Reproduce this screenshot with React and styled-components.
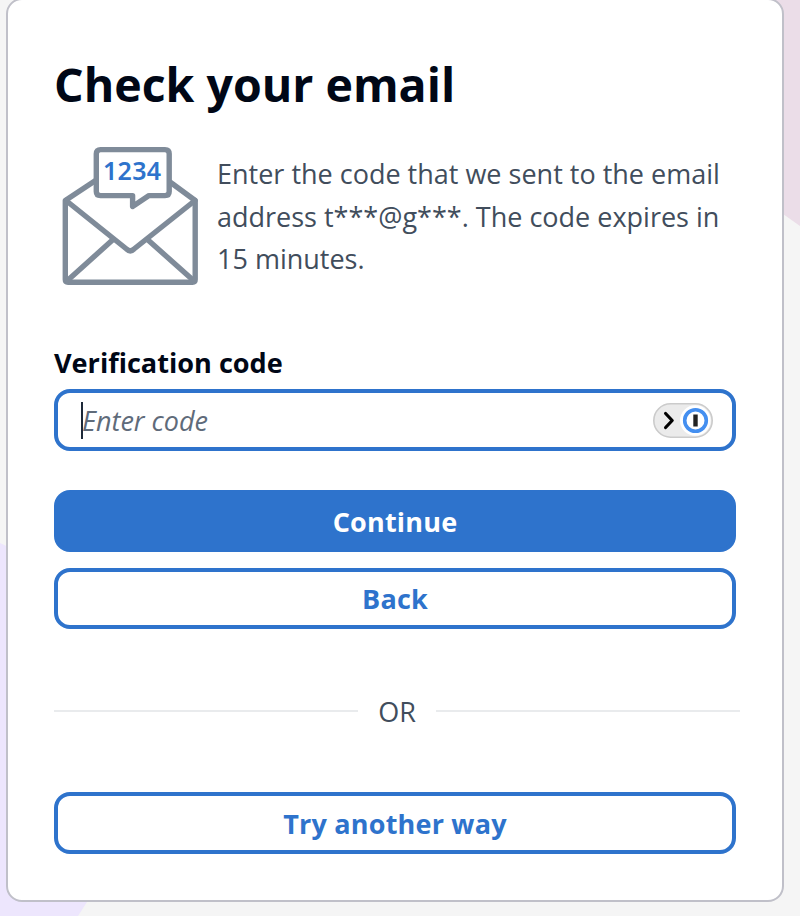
import React, { useState } from "react";
import styled, { createGlobalStyle } from "styled-components";

export default function App() {
  const [code, setCode] = useState("");

  return (
    <>
      <GlobalStyle />
      <Page>
        <Backdrop viewBox="0 0 800 916">
          <path d="M776 0H800V226L776 209Z" fill="#ebdde8" />
          <path d="M0 543L40 562V860H114L78 916H0Z" fill="#ede6fd" />
        </Backdrop>
        <Card>
          <Title>Check your email</Title>

          <Intro>
            <EmailArt />
            <Message>
              Enter the code that we sent to the email address t***@g***. The
              code expires in 15 minutes.
            </Message>
          </Intro>

          <Label htmlFor="code">Verification code</Label>
          <Field>
            <Caret />
            <Input
              id="code"
              placeholder="Enter code"
              value={code}
              onChange={(e) => setCode(e.target.value)}
            />
            <PasswordBadge />
          </Field>

          <Actions>
            <Button $primary>Continue</Button>
            <Button>Back</Button>
          </Actions>

          <Divider>
            <Line />
            <span>OR</span>
            <Line />
          </Divider>

          <Button>Try another way</Button>
        </Card>
      </Page>
    </>
  );
}

const EmailArt = () => (
  <Art viewBox="0 0 160 160">
    <g
      fill="none"
      stroke="#7f8b99"
      strokeWidth="5.4"
      strokeLinejoin="round"
      strokeLinecap="round"
    >
      <path d="M45.5 45.5L15.3 65.5V144.5Q15.3 147.2 18 147.2H142.5Q145.2 147.2 145.2 144.5V65.5L120 47" />
      <path d="M16 65.5L76.5 114Q80.3 117.6 84 114L145 65.5" />
      <path d="M17.5 145.5L62.5 105M143.5 145.5L98 105" />
      <path
        d="M50.5 14.6H115Q119.2 14.6 119.2 18.8V56.5Q119.2 60.6 115 60.6H99L82.6 71.5V60.6H50.5Q46.3 60.6 46.3 56.5V18.8Q46.3 14.6 50.5 14.6Z"
        fill="#fff"
      />
    </g>
    <ArtText x="53" y="45.2" textLength="58">
      1234
    </ArtText>
  </Art>
);

const PasswordBadge = () => (
  <Badge viewBox="0 0 60 35">
    <rect x="0.8" y="0.8" width="58.4" height="33.4" rx="16.7" fill="#ebebeb" stroke="#cbcbcb" strokeWidth="1.6" />
    <circle cx="42.3" cy="17.5" r="15.3" fill="#fff" />
    <path d="M12.6 10.5L19.2 17.5L12.6 24.5" fill="none" stroke="#000" strokeWidth="3.2" strokeLinecap="round" strokeLinejoin="round" />
    <circle cx="42.5" cy="17.5" r="10.8" fill="#fff" stroke="#448ff0" strokeWidth="3.6" />
    <rect x="40.3" y="11.5" width="4.4" height="12" fill="#222" />
  </Badge>
);

const GlobalStyle = createGlobalStyle`
  * {
    box-sizing: border-box;
  }
  body {
    margin: 0;
    overflow: hidden;
    background: #f5f5f5;
    font-family: "Open Sans", "Noto Sans", sans-serif;
  }
`;

const Page = styled.main`
  position: relative;
  height: 916px;
  padding-left: 6px;
  overflow: hidden;
`;

const Backdrop = styled.svg`
  position: absolute;
  top: 0;
  left: 0;
  width: 800px;
  height: 916px;
`;

const Card = styled.section`
  position: relative;
  width: 778px;
  height: 904px;
  margin-top: -2px;
  padding: 51px 46px 0;
  background: #fff;
  border: 2px solid #c0c0c9;
  border-radius: 16px;
`;

const Title = styled.h1`
  margin: 0;
  color: #000716;
  font-size: 46.5px;
  font-weight: 700;
  line-height: 66px;
  white-space: nowrap;
`;

const Intro = styled.div`
  display: flex;
  align-items: flex-start;
  height: 160px;
  margin-top: 18px;
  margin-left: -4px;
`;

const Art = styled.svg`
  flex: none;
  width: 160px;
  height: 160px;
`;

const ArtText = styled.text`
  fill: #2e73cc;
  font-family: "Noto Sans", sans-serif;
  font-size: 25px;
  font-weight: 600;
`;

const Message = styled.p`
  width: 530px;
  margin: 18px 0 0 7px;
  color: #414d5c;
  font-size: 27px;
  line-height: 42.6px;
`;

const Label = styled.label`
  display: block;
  margin-top: 49px;
  color: #000716;
  font-size: 27.1px;
  font-weight: 700;
  line-height: 38px;
`;

const Field = styled.div`
  display: flex;
  align-items: center;
  height: 62px;
  margin-top: 7px;
  padding: 0 19px 0 23px;
  background: #fff;
  border: 4px solid #2e73cc;
  border-radius: 16px;
`;

const Caret = styled.span`
  width: 2px;
  height: 37px;
  margin-right: -1px;
  background: #1d2939;
`;

const Input = styled.input`
  flex: 1;
  min-width: 0;
  padding: 0;
  border: none;
  outline: none;
  background: transparent;
  color: #000716;
  font-family: inherit;
  font-size: 27px;
  &::placeholder {
    color: #5f6b7a;
    font-style: italic;
    opacity: 1;
  }
`;

const Badge = styled.svg`
  flex: none;
  width: 60px;
  height: 35px;
`;

const Actions = styled.div`
  display: flex;
  flex-direction: column;
  gap: 16px;
  margin-top: 39px;
`;

const Button = styled.button`
  width: 100%;
  height: 62px;
  padding: 0;
  border: 4px solid #2e73cc;
  border-radius: 16px;
  background: ${({ $primary }) => ($primary ? "#2e73cc" : "#fff")};
  color: ${({ $primary }) => ($primary ? "#fff" : "#2e73cc")};
  font-family: inherit;
  font-size: 27px;
  font-weight: 700;
  letter-spacing: 0.2px;
  cursor: pointer;
  & + & {
    height: 61px;
  }
`;

const Divider = styled.div`
  display: flex;
  align-items: center;
  gap: 20px;
  height: 42px;
  margin: 61px -4px 60px 0;
  color: #414d5c;
  font-size: 27px;
`;

const Line = styled.div`
  flex: 1;
  height: 2px;
  background: #e9ebed;
`;
